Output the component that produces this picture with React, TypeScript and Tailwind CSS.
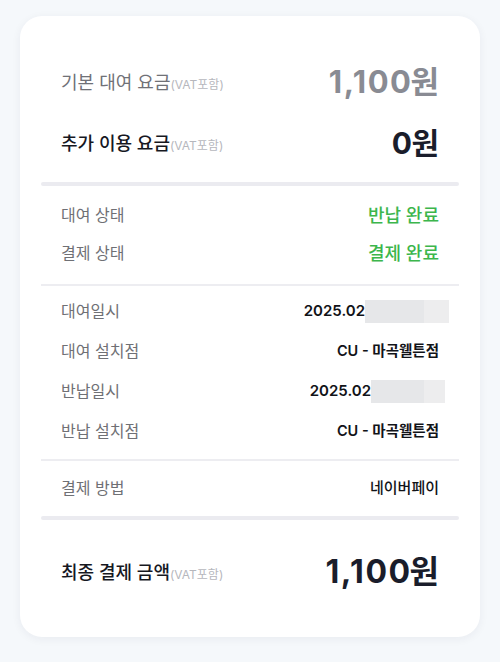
const font = { fontFamily: 'Inter, "Noto Sans CJK KR", sans-serif' };

function Divider({ thick }: { thick?: boolean }) {
  return thick ? (
    <div className="h-[4px] rounded-full bg-[#ebebf0]" />
  ) : (
    <div className="h-[2px] bg-[#ededf1]" />
  );
}

function Vat() {
  return <span className="text-[12px] font-normal text-[#b6b7bd]">(VAT포함)</span>;
}

function InfoRow({ label, children }: { label: string; children: React.ReactNode }) {
  return (
    <div className="flex h-[24px] items-center justify-between px-5">
      <span className="text-[16px] text-[#6f7075]">{label}</span>
      {children}
    </div>
  );
}

export default function App() {
  return (
    <div className="min-h-[662px] w-[500px] bg-[#f5f8fb] pt-4" style={font}>
      <div className="mx-5 h-[621px] rounded-[22px] bg-white px-[21px] shadow-[0_2px_10px_rgba(30,40,60,0.06)]">
        {/* 요금 */}
        <div className="flex flex-col gap-[21px] pb-[19px] pt-[46px]">
          <div className="flex h-[40px] items-center justify-between px-5">
            <span className="text-[18px] text-[#707177]">
              기본 대여 요금<Vat />
            </span>
            <span className="text-[31px] font-bold text-[#898b93]">
              <span className="tracking-[1.5px]">1,10</span>
              <span className="tracking-[-0.5px]">0</span>원
            </span>
          </div>
          <div className="flex h-[40px] items-center justify-between px-5">
            <span className="text-[18px] font-medium text-[#16181f]">
              추가 이용 요금<Vat />
            </span>
            <span className="text-[30px] font-bold text-[#1a1d2b]">
              <span className="tracking-[-0.5px]">0</span>원
            </span>
          </div>
        </div>
        <Divider thick />

        {/* 상태 */}
        <div className="flex flex-col gap-[14px] pb-[19px] pt-[17px]">
          <InfoRow label="대여 상태">
            <span className="text-[18px] font-medium text-[#3cb64c]">반납 완료</span>
          </InfoRow>
          <InfoRow label="결제 상태">
            <span className="text-[18px] font-medium text-[#3cb64c]">결제 완료</span>
          </InfoRow>
        </div>
        <Divider />

        {/* 대여/반납 정보 */}
        <div className="flex flex-col gap-[16px] pb-[16px] pt-[13px]">
          <InfoRow label="대여일시">
            <span className="mr-[-10px] flex items-center">
              <span className="text-[15px] font-semibold text-[#111318]">2025.02</span>
              <span className="flex h-[23px]">
                <span className="w-[59px] bg-[#e6e7e9]" />
                <span className="w-[25px] bg-[#ededee]" />
              </span>
            </span>
          </InfoRow>
          <InfoRow label="대여 설치점">
            <span className="text-[14.5px] font-semibold text-[#111318]">CU - 마곡웰튼점</span>
          </InfoRow>
          <InfoRow label="반납일시">
            <span className="mr-[-6px] flex items-center">
              <span className="text-[15px] font-semibold text-[#111318]">2025.02</span>
              <span className="flex h-[23px]">
                <span className="w-[53px] bg-[#e6e7e9]" />
                <span className="w-[21px] bg-[#ededee]" />
              </span>
            </span>
          </InfoRow>
          <InfoRow label="반납 설치점">
            <span className="text-[14.5px] font-semibold text-[#111318]">CU - 마곡웰튼점</span>
          </InfoRow>
        </div>
        <Divider />

        <div className="pb-[16px] pt-[15px]">
          <InfoRow label="결제 방법">
            <span className="text-[15px] font-medium text-[#111318]">네이버페이</span>
          </InfoRow>
        </div>
        <Divider thick />

        {/* 최종 금액 */}
        <div className="pt-[32px]">
          <div className="flex h-[40px] items-center justify-between px-5">
            <span className="text-[18px] font-medium text-[#16181f]">
              최종 결제 금액<Vat />
            </span>
            <span className="text-[32px] font-bold text-[#1a1d2b]">
              <span className="tracking-[1.5px]">1,10</span>
              <span className="tracking-[-0.5px]">0</span>원
            </span>
          </div>
        </div>
      </div>
    </div>
  );
}
